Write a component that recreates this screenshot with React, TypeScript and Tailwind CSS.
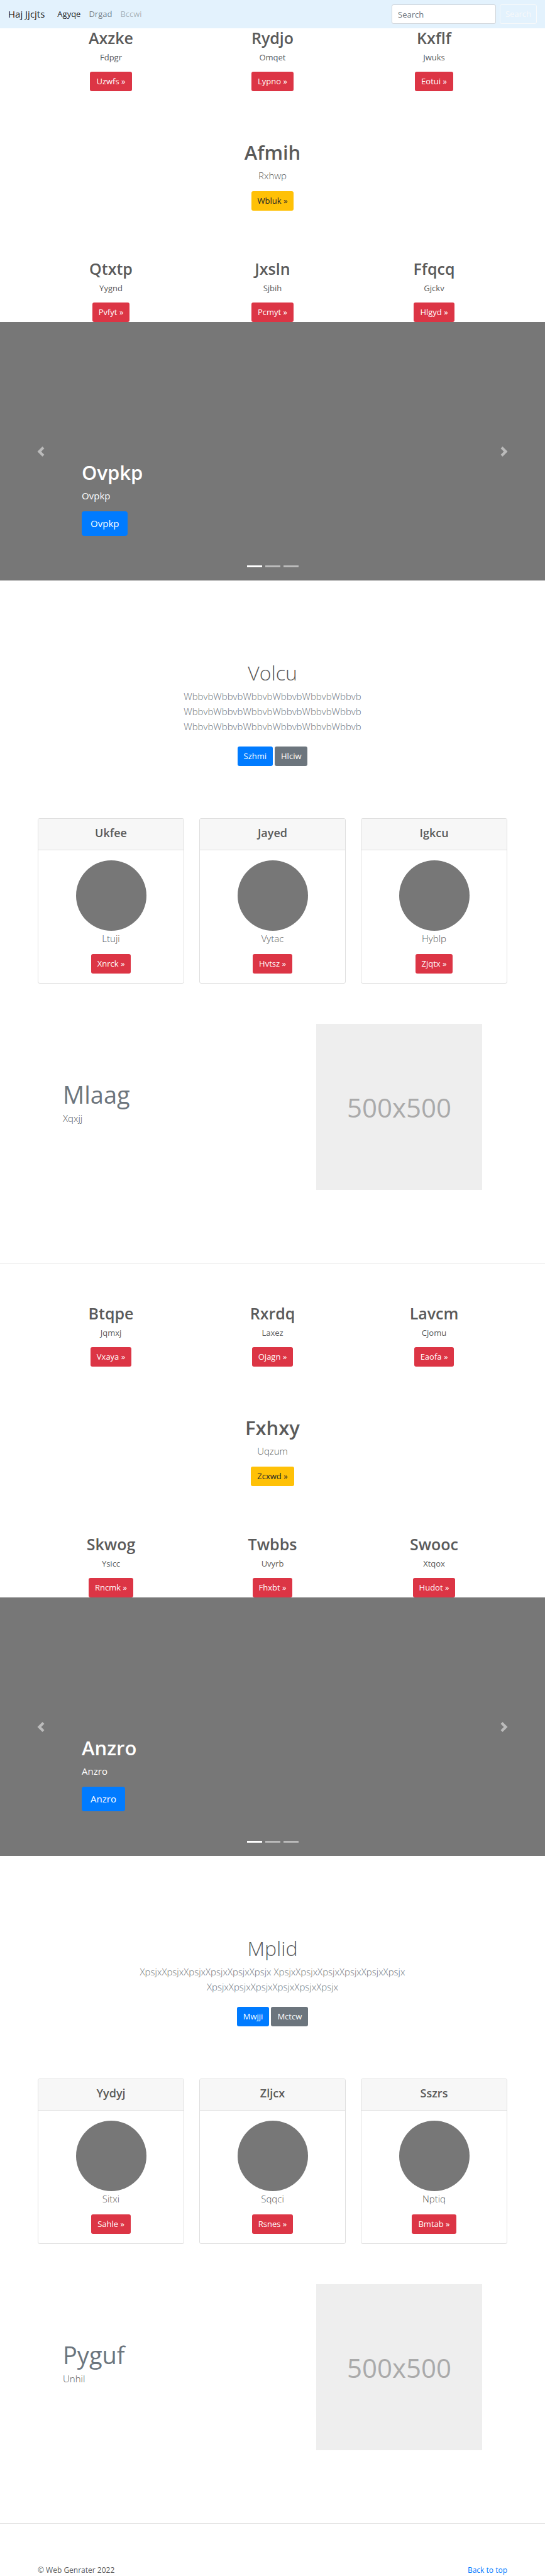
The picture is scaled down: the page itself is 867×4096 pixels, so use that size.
import React from "react";

type Item = { title: string; text: string; action: string };

type Block = {
  top: Item[];
  feature: Item;
  bottom: Item[];
  slide: string;
  intro: { title: string; text: string[]; primary: string; secondary: string };
  cards: Item[];
  showcase: { title: string; text: string };
};

const blocks: Block[] = [
  {
    top: [
      { title: "Axzke", text: "Fdpgr", action: "Uzwfs" },
      { title: "Rydjo", text: "Omqet", action: "Lypno" },
      { title: "Kxflf", text: "Jwuks", action: "Eotui" },
    ],
    feature: { title: "Afmih", text: "Rxhwp", action: "Wbluk" },
    bottom: [
      { title: "Qtxtp", text: "Yygnd", action: "Pvfyt" },
      { title: "Jxsln", text: "Sjbih", action: "Pcmyt" },
      { title: "Ffqcq", text: "Gjckv", action: "Hlgyd" },
    ],
    slide: "Ovpkp",
    intro: {
      title: "Volcu",
      text: [
        "WbbvbWbbvbWbbvbWbbvbWbbvbWbbvb",
        "WbbvbWbbvbWbbvbWbbvbWbbvbWbbvb",
        "WbbvbWbbvbWbbvbWbbvbWbbvbWbbvb",
      ],
      primary: "Szhmi",
      secondary: "Hlciw",
    },
    cards: [
      { title: "Ukfee", text: "Ltuji", action: "Xnrck" },
      { title: "Jayed", text: "Vytac", action: "Hvtsz" },
      { title: "Igkcu", text: "Hyblp", action: "Zjqtx" },
    ],
    showcase: { title: "Mlaag", text: "Xqxjj" },
  },
  {
    top: [
      { title: "Btqpe", text: "Jqmxj", action: "Vxaya" },
      { title: "Rxrdq", text: "Laxez", action: "Ojagn" },
      { title: "Lavcm", text: "Cjomu", action: "Eaofa" },
    ],
    feature: { title: "Fxhxy", text: "Uqzum", action: "Zcxwd" },
    bottom: [
      { title: "Skwog", text: "Ysicc", action: "Rncmk" },
      { title: "Twbbs", text: "Uvyrb", action: "Fhxbt" },
      { title: "Swooc", text: "Xtqox", action: "Hudot" },
    ],
    slide: "Anzro",
    intro: {
      title: "Mplid",
      text: ["XpsjxXpsjxXpsjxXpsjxXpsjxXpsjx XpsjxXpsjxXpsjxXpsjxXpsjxXpsjx", "XpsjxXpsjxXpsjxXpsjxXpsjxXpsjx"],
      primary: "Mwjji",
      secondary: "Mctcw",
    },
    cards: [
      { title: "Yydyj", text: "Sitxi", action: "Sahle" },
      { title: "Zljcx", text: "Sqqci", action: "Rsnes" },
      { title: "Sszrs", text: "Nptiq", action: "Bmtab" },
    ],
    showcase: { title: "Pyguf", text: "Unhil" },
  },
];

const tones = {
  danger: "bg-[#dc3545] text-white",
  warning: "bg-[#ffc107] text-[#212529]",
  primary: "bg-[#007bff] text-white",
  secondary: "bg-[#6c757d] text-white",
};

function Action({ tone, children }: { tone: keyof typeof tones; children: React.ReactNode }) {
  return (
    <a href="#" className={`inline-flex h-[31px] items-center rounded-[3px] px-[10px] text-[13px] ${tones[tone]}`}>
      {children}
    </a>
  );
}

function Container({ className = "", children }: { className?: string; children: React.ReactNode }) {
  return <div className={`mx-auto max-w-[771px] px-3 ${className}`}>{children}</div>;
}

function Columns({ items }: { items: Item[] }) {
  return (
    <Container>
      <div className="grid grid-cols-3 gap-6 text-center">
        {items.map((item) => (
          <div key={item.title} className="flex flex-col items-center">
            <h2 className="mb-[6px] text-[25px] leading-[31px] font-semibold">{item.title}</h2>
            <p className="mb-[13px] text-[13px] leading-[19px]">{item.text}</p>
            <Action tone="danger">{item.action} »</Action>
          </div>
        ))}
      </div>
    </Container>
  );
}

function Feature({ item }: { item: Item }) {
  return (
    <div className="flex flex-col items-center pt-[78px] pb-[77px] text-center">
      <h1 className="mb-[6px] text-[31px] leading-[38px] font-semibold">{item.title}</h1>
      <p className="mb-[13px] text-[15px] leading-[24px] font-light">{item.text}</p>
      <Action tone="warning">{item.action} »</Action>
    </div>
  );
}

function Chevron({ flip = false }: { flip?: boolean }) {
  return (
    <svg viewBox="0 0 8 8" className="size-4" fill="#fff" aria-hidden="true">
      <path
        d={
          flip
            ? "M2.75 0l-1.5 1.5L3.75 4l-2.5 2.5L2.75 8l4-4-4-4z"
            : "M5.25 0l-4 4 4 4 1.5-1.5L4.25 4l2.5-2.5L5.25 0z"
        }
      />
    </svg>
  );
}

function Carousel({ label }: { label: string }) {
  return (
    <section className="flex h-[411px] bg-[#777] text-white">
      <button type="button" aria-label="Previous" className="flex w-[15%] items-center justify-center opacity-50">
        <Chevron />
      </button>
      <div className="flex flex-1 flex-col items-start justify-end">
        <h1 className="mb-[6px] text-[31px] leading-[38px] font-semibold">{label}</h1>
        <p className="mb-[13px] text-[15px] leading-[24px]">{label}</p>
        <a href="#" className="flex h-[39px] items-center rounded-[4px] bg-[#007bff] px-[14px] text-[15px]">
          {label}
        </a>
        <div className="mt-[47px] mb-[21px] flex gap-[5px] self-center">
          <button type="button" aria-label="Slide 1" className="h-[3px] w-6 bg-white" />
          <button type="button" aria-label="Slide 2" className="h-[3px] w-6 bg-white/50" />
          <button type="button" aria-label="Slide 3" className="h-[3px] w-6 bg-white/50" />
        </div>
      </div>
      <button type="button" aria-label="Next" className="flex w-[15%] items-center justify-center opacity-50">
        <Chevron flip />
      </button>
    </section>
  );
}

function Intro({ intro }: { intro: Block["intro"] }) {
  return (
    <section className="pt-32 pb-[83px] text-center">
      <h1 className="mb-[6px] text-[32px] leading-[38px] font-light">{intro.title}</h1>
      <div className="mb-[20px] text-[15px] leading-[24px] font-light text-[#6c757d]">
        {intro.text.map((line, i) => (
          <p key={i}>{line}</p>
        ))}
      </div>
      <div className="flex justify-center gap-[3px]">
        <Action tone="primary">{intro.primary}</Action>
        <Action tone="secondary">{intro.secondary}</Action>
      </div>
    </section>
  );
}

function Cards({ items }: { items: Item[] }) {
  return (
    <Container>
      <div className="grid grid-cols-3 gap-6 text-center">
        {items.map((item) => (
          <article key={item.title} className="overflow-hidden rounded-[3px] border border-[#dfdfdf]">
            <header className="border-b border-[#dfdfdf] bg-[#f7f7f7] pt-[10px] pb-[15px]">
              <h4 className="text-[18px] leading-[24px] font-semibold">{item.title}</h4>
            </header>
            <div className="flex flex-col items-center pt-4 pb-[15px]">
              <div className="size-28 rounded-full bg-[#777]" />
              <p className="mb-[13px] text-[15px] leading-[24px] font-light">{item.text}</p>
              <Action tone="danger">{item.action} »</Action>
            </div>
          </article>
        ))}
      </div>
    </Container>
  );
}

function Showcase({ title, text }: Block["showcase"]) {
  return (
    <Container className="pt-16 pb-[116px]">
      <div className="flex justify-between px-10">
        <div className="pt-[92px]">
          <h2 className="mb-[6px] text-[38px] leading-[40px] text-[#6c757d]">{title}</h2>
          <p className="text-[15px] leading-[24px] font-light">{text}</p>
        </div>
        <div className="flex size-[264px] items-center justify-center bg-[#eee] text-[42px] text-[#aaa]">500x500</div>
      </div>
    </Container>
  );
}

export default function App() {
  return (
    <div className="bg-white font-['Open_Sans','Noto_Sans',sans-serif] text-[#5a5a5a]">
      <nav className="flex h-[45px] items-center bg-[#e3f2fd] px-[13px]">
        <a href="#" className="mr-[20px] text-[15px] text-black/90">
          Haj Jjcjts
        </a>
        <div className="flex gap-[13px] text-[13px]">
          <a href="#" className="text-black/90">
            Agyqe
          </a>
          <a href="#" className="text-black/50">
            Drgad
          </a>
          <a href="#" className="text-black/30">
            Bccwi
          </a>
        </div>
        <form className="ml-auto flex gap-[6px]" onSubmit={(e) => e.preventDefault()}>
          <input
            type="search"
            placeholder="Search"
            aria-label="Search"
            className="h-[31px] w-[166px] rounded-[3px] border border-[#ced4da] bg-white px-[9px] text-[13px] placeholder:text-[#6c757d]"
          />
          <button
            type="submit"
            className="h-[31px] w-[59px] rounded-[3px] border border-[#f8f9fa] text-[13px] text-[#f8f9fa]"
          >
            Search
          </button>
        </form>
      </nav>

      <main>
        {blocks.map((block, i) => (
          <div key={block.slide} className={i > 0 ? "pt-16" : ""}>
            <Columns items={block.top} />
            <Feature item={block.feature} />
            <Columns items={block.bottom} />
            <Carousel label={block.slide} />
            <Intro intro={block.intro} />
            <Cards items={block.cards} />
            <Showcase {...block.showcase} />
            <hr className="border-t border-black/10" />
          </div>
        ))}
      </main>

      <footer>
        <Container className="flex justify-between pt-16 text-[12px] leading-[19px]">
          <p>© Web Genrater 2022</p>
          <a href="#" className="text-[#007bff]">
            Back to top
          </a>
        </Container>
      </footer>
    </div>
  );
}
